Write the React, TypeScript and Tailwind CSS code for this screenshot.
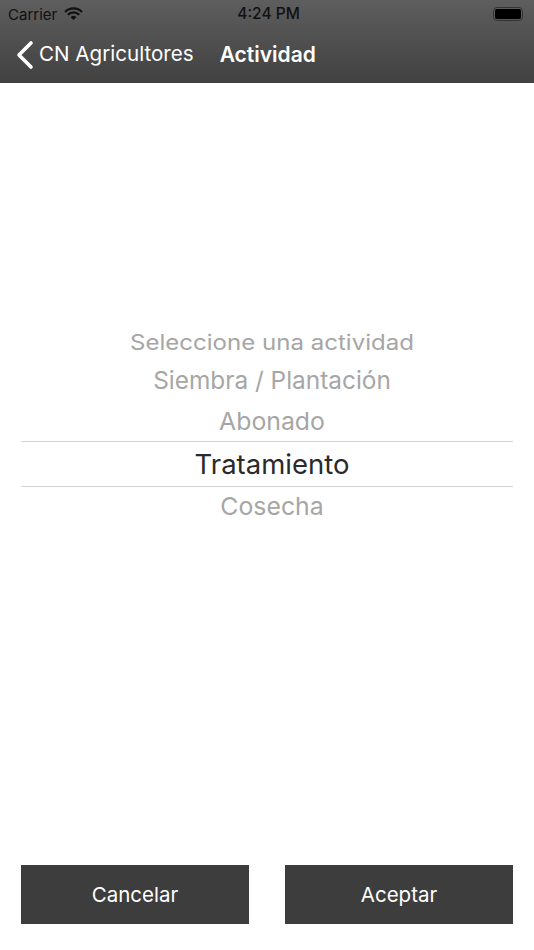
import React from "react";

const WifiIcon = () => (
  <svg width="19" height="14" viewBox="0 0 19 14" fill="none" stroke="#111" strokeWidth="2.2">
    <path d="M1 5 a12 12 0 0 1 17 0" />
    <path d="M3.8 7.8 a8 8 0 0 1 11.4 0" />
    <path d="M9.5 13 L6.6 10.2 a4.2 4.2 0 0 1 5.8 0 Z" fill="#111" stroke="none" />
  </svg>
);

const BackChevron = () => (
  <svg width="18" height="30" viewBox="0 0 18 30" fill="none" stroke="#fff" strokeWidth="3.6" strokeLinecap="round" strokeLinejoin="round">
    <path d="M15 3 L3 15 L15 27" />
  </svg>
);

const PickerRow: React.FC<{ label: string; className: string; labelClassName?: string }> = ({
  label,
  className,
  labelClassName = "",
}) => (
  <div className={`flex items-center justify-center pl-[10px] ${className}`}>
    <span className={labelClassName}>{label}</span>
  </div>
);

export default function App() {
  return (
    <div className="w-[534px] h-[950px] bg-white flex flex-col font-['Inter','Liberation_Sans',sans-serif] overflow-hidden">
      {/* nav bar */}
      <div className="h-[83px] shrink-0 bg-gradient-to-b from-[#5e5e5e] to-[#414141] flex flex-col">
        <div className="h-[28px] pl-[8px] pr-[11px] flex items-center justify-between text-[#111]">
          <div className="flex items-center gap-[7px] w-[126px]">
            <span className="text-[15px] leading-none">Carrier</span>
            <WifiIcon />
          </div>
          <span className="text-[15.5px] font-medium leading-none">4:24 PM</span>
          <div className="w-[120px] flex justify-end items-center">
            <div className="w-[30px] h-[14px] rounded-[4px] border border-[#333] p-px">
              <div className="w-full h-full bg-black rounded-[2px]" />
            </div>
          </div>
        </div>
        <div className="flex items-center pl-[16px] pt-[1px] h-[52px] text-white">
          <BackChevron />
          <span className="ml-[5px] text-[20.6px] leading-none">CN Agricultores</span>
          <span className="ml-[26px] text-[21px] font-semibold leading-none">Actividad</span>
        </div>
      </div>

      {/* picker */}
      <div className="flex-1 px-[21px] flex flex-col justify-start pt-[237px]">
        <PickerRow
          label="Seleccione una actividad"
          className="h-[40px] pt-[6px] text-[21px] text-[#a6a6a6]"
          labelClassName="inline-block scale-x-[1.145]"
        />
        <PickerRow label="Siembra / Plantación" className="h-[38px] pt-[2px] text-[24.4px] text-[#a6a6a6]" />
        <PickerRow label="Abonado" className="h-[43px] pt-[5px] text-[24.8px] text-[#a6a6a6]" />
        <PickerRow label="Tratamiento" className="h-[46px] pt-[2px] text-[27.5px] text-[#2a2a2a] border-y border-[#d4d4d4]" />
        <PickerRow label="Cosecha" className="h-[41px] pb-[1px] text-[24.8px] text-[#a6a6a6]" />
      </div>

      {/* buttons */}
      <div className="px-[21px] pb-[26px] flex justify-between">
        <button className="w-[228px] h-[59px] pt-[2px] bg-[#3d3d3d] text-white text-[20.5px]">Cancelar</button>
        <button className="w-[228px] h-[59px] pt-[2px] bg-[#3d3d3d] text-white text-[20.5px]">Aceptar</button>
      </div>
    </div>
  );
}
